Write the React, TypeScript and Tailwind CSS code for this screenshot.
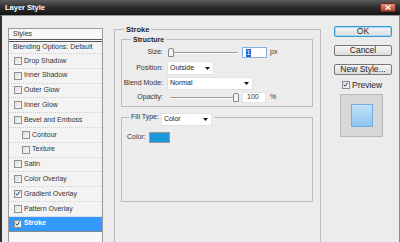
import React from "react";

const FONT = "font-['Liberation_Sans',Arial,sans-serif]";

function Box({ checked, size = 8 }: { checked?: boolean; size?: number }) {
  return (
    <span
      className="relative shrink-0 border border-[#8e8e8e] bg-gradient-to-br from-[#dedede] to-[#fbfbfb]"
      style={{ width: size, height: size }}
    >
      {checked && (
        <svg viewBox="0 0 8 8" className="absolute left-0 top-0" style={{ width: size - 2, height: size - 2 }}>
          <path d="M1.2 3.6 L3 5.6 L6.2 0.8" stroke="#1d3b86" strokeWidth="1.3" fill="none" />
        </svg>
      )}
    </span>
  );
}

const items: { label: string; indent?: boolean; checked?: boolean; selected?: boolean }[] = [
  { label: "Drop Shadow" },
  { label: "Inner Shadow" },
  { label: "Outer Glow" },
  { label: "Inner Glow" },
  { label: "Bevel and Emboss" },
  { label: "Contour", indent: true },
  { label: "Texture", indent: true },
  { label: "Satin" },
  { label: "Color Overlay" },
  { label: "Gradient Overlay", checked: true },
  { label: "Pattern Overlay" },
  { label: "Stroke", checked: true, selected: true },
];

function Slider({ pos }: { pos: number }) {
  return (
    <div className="relative w-[72px] h-full">
      <div className="absolute left-[3px] right-[1px] top-[5px] h-[2px] border-t border-[#9a9a9a] border-b border-b-[#ffffff]" />
      <svg
        viewBox="0 0 6 9"
        className="absolute top-[1px] w-[6px] h-[9px]"
        style={{ left: pos }}
      >
        <path d="M0.5 2 Q0.5 0.5 2 0.5 L4 0.5 Q5.5 0.5 5.5 2 L5.5 8.5 L0.5 8.5 Z" fill="#f4f4f4" stroke="#8a8a8a" strokeWidth="1" />
      </svg>
    </div>
  );
}

function Arrow() {
  return (
    <svg viewBox="0 0 5 3" className="w-[5px] h-[3px]">
      <path d="M0 0 L5 0 L2.5 3 Z" fill="#111" />
    </svg>
  );
}

function Dropdown({ text, w }: { text: string; w: number }) {
  return (
    <div
      className="h-full bg-white border border-[#e2e2e2] flex items-center justify-between pl-[2px] pr-[3px] text-[7px] text-[#222]"
      style={{ width: w }}
    >
      <span>{text}</span>
      <Arrow />
    </div>
  );
}

function Btn({ children, primary }: { children: React.ReactNode; primary?: boolean }) {
  return (
    <div
      className={
        "h-[11px] w-full rounded-[2px] border flex items-center justify-center text-[8.5px] text-[#1e1e1e] bg-gradient-to-b from-[#f6f6f6] to-[#dcdcdc] " +
        (primary ? "border-[#3a9ad9] shadow-[inset_0_0_0_1px_#a6d8f5]" : "border-[#777777]")
      }
    >
      {children}
    </div>
  );
}

export default function App() {
  return (
    <div className={"w-[400px] h-[242px] overflow-hidden flex flex-col bg-[#ececec] " + FONT}>
      {/* title bar */}
      <div className="h-[15px] shrink-0 flex items-center justify-between bg-gradient-to-b from-[#5c5c5c] via-[#2c2c2c] to-[#141414] pl-[5px] pr-[4px]">
        <span className="text-[7.5px] font-bold text-white leading-none">Layer Style</span>
        <div className="w-[16px] h-[9px] rounded-[2px] border border-[#6f2b1d] bg-gradient-to-b from-[#e0917c] to-[#b0432c] flex items-center justify-center">
          <svg viewBox="0 0 6 5" className="w-[6px] h-[5px]">
            <path d="M0.5 0.5 L5.5 4.5 M5.5 0.5 L0.5 4.5" stroke="#fff" strokeWidth="1.2" />
          </svg>
        </div>
      </div>

      {/* body */}
      <div className="flex-1 flex items-start border-l-2 border-l-[#2f2f2f] border-r border-r-[#8a8a8a] border-t border-t-[#9a9a9a] pl-[6px]">
        {/* left list */}
        <div className="w-[95px] h-[230px] mt-[12px] shrink-0 border border-[#9a9a9a] bg-[#f3f3f3] text-[7px] text-[#333]">
          <div className="h-[12.5px] flex items-center pl-[4px] bg-[#f8f8f8] border-b-[3px] border-double border-b-[#555]">Styles</div>
          <div className="h-[12.5px] flex items-center pl-[4px] border-b border-dotted border-b-[#cfcfcf]">
            Blending Options: Default
          </div>
          {items.map((it) => (
            <div
              key={it.label}
              className={
                "h-[14.8px] flex items-center gap-[2px] border-b border-dotted " +
                (it.selected
                  ? "bg-[#3399ff] text-white font-bold border-b-[#8a8a8a] border-solid"
                  : "border-b-[#cfcfcf]")
              }
              style={{ paddingLeft: it.indent ? 13 : 5 }}
            >
              <Box checked={it.checked} />
              <span>{it.label}</span>
            </div>
          ))}
          <div className="h-[40px] bg-[#f7f7f7]" />
        </div>

        {/* main fieldset */}
        <div className="relative ml-[11px] mt-[13px] w-[207px] h-[240px] shrink-0 border border-[#bcbcbc] pl-[6px] pt-[9px] pr-[7px]">
          <span className="absolute -top-[5px] left-[9px] px-[2px] bg-[#ececec] text-[7.5px] font-bold text-[#222] leading-[9px]">
            Stroke
          </span>

          {/* Structure */}
          <div className="relative h-[68px] border border-[#bcbcbc] pt-[7px] text-[7px] text-[#333]">
            <span className="absolute -top-[5px] left-[9px] px-[2px] bg-[#ececec] text-[7px] font-bold text-[#222] leading-[9px]">
              Structure
            </span>
            <div className="h-[11px] flex items-center">
              <span className="w-[41px] text-right">Size:</span>
              <div className="ml-[4px] h-full">
                <Slider pos={1} />
              </div>
              <div className="ml-[3px] w-[25px] h-full bg-white border border-[#7fb2e0] flex items-center pl-[3px]">
                <span className="bg-[#2a62c9] text-white leading-[8px] px-[0.5px]">1</span>
              </div>
              <span className="ml-[3px]">px</span>
            </div>
            <div className="h-[14px] mt-[3px] flex items-center">
              <span className="w-[41px] text-right">Position:</span>
              <div className="ml-[4px] h-full">
                <Dropdown text="Outside" w={47} />
              </div>
            </div>
            <div className="h-[13px] mt-[2px] flex items-center">
              <span className="w-[41px] text-right">Blend Mode:</span>
              <div className="ml-[4px] h-full">
                <Dropdown text="Normal" w={86} />
              </div>
            </div>
            <div className="h-[11px] mt-[2px] flex items-center">
              <span className="w-[41px] text-right">Opacity:</span>
              <div className="ml-[4px] h-full">
                <Slider pos={66} />
              </div>
              <div className="ml-[3px] w-[24px] h-full bg-white border border-[#e4e4e4] flex items-center pl-[4px]">
                <span>100</span>
              </div>
              <span className="ml-[4px]">%</span>
            </div>
          </div>

          {/* Fill Type */}
          <div className="relative mt-[10px] h-[85px] border border-[#bcbcbc] pt-[14px] pl-[5px] text-[7px] text-[#333]">
            <div className="absolute -top-[5px] left-[7px] px-[2px] bg-[#ececec] h-[13px] flex items-center gap-[2px]">
              <span className="relative -top-[2px]">Fill Type:</span>
              <Dropdown text="Color" w={51} />
            </div>
            <div className="h-[11px] flex items-center">
              <span>Color:</span>
              <div className="ml-[3px] w-[21px] h-full border border-[#9a9a9a] bg-[#1c97dd]" />
            </div>
          </div>
        </div>

        {/* right column */}
        <div className="ml-[13px] mt-[10px] w-[58px] shrink-0 flex flex-col">
          <Btn primary>OK</Btn>
          <div className="mt-[8px]">
            <Btn>Cancel</Btn>
          </div>
          <div className="mt-[8px]">
            <Btn>New Style...</Btn>
          </div>
          <div className="mt-[6px] ml-[8px] h-[8px] flex items-center gap-[2px] text-[8.5px] text-[#1e1e1e]">
            <Box checked />
            <span>Preview</span>
          </div>
          <div className="mt-[5px] ml-[6px] w-[43px] h-[43px] border border-[#b8b8b8] bg-[#d8d8d8] flex items-center justify-center">
            <div className="w-[22px] h-[23px] border border-[#74aee0] bg-gradient-to-b from-[#c2e2fa] to-[#8dc5ef]" />
          </div>
        </div>
      </div>
    </div>
  );
}
